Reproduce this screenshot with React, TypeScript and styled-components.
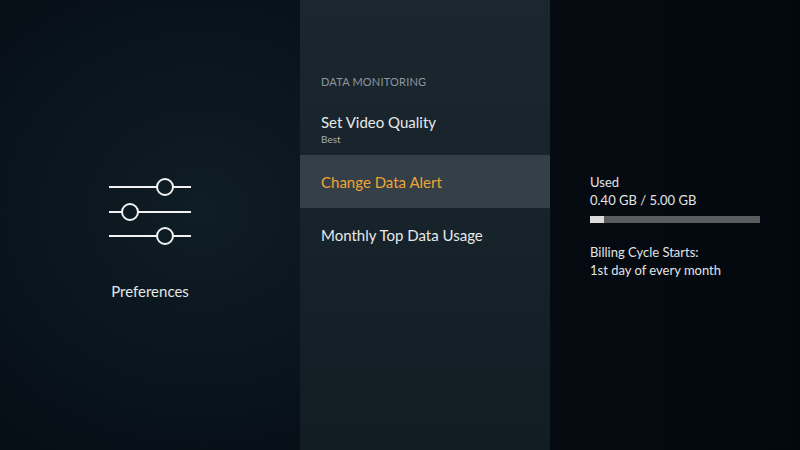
import styled, { createGlobalStyle } from "styled-components";

const GlobalStyle = createGlobalStyle`
  html, body {
    margin: 0;
    padding: 0;
    background: #050b11;
  }
  body {
    font-family: Lato, "Noto Sans", sans-serif;
  }
`;

const Screen = styled.div`
  width: 800px;
  height: 450px;
  display: grid;
  grid-template-columns: 300px 250px 250px;
  overflow: hidden;
  background: radial-gradient(ellipse 420px 380px at 200px 210px, #0f1d25 0%, #08121a 55%, #040910 100%);
`;

const LeftPanel = styled.div`
  display: flex;
  flex-direction: column;
  align-items: center;
  padding-top: 178px;
`;

const IconWrap = styled.div`
  width: 84px;
  height: 70px;
  margin-right: 1px;
`;

const PanelLabel = styled.div`
  margin-top: 33px;
  font-size: 15px;
  line-height: 20px;
  color: #e4e6e7;
`;

const MiddlePanel = styled.div`
  display: flex;
  flex-direction: column;
  padding-top: 75px;
  background: linear-gradient(180deg, #1b262e 0%, #17232b 50%, #111c23 100%);
`;

const SectionTitle = styled.div`
  padding-left: 21px;
  margin-bottom: 13px;
  font-size: 11px;
  line-height: 14px;
  letter-spacing: 0.2px;
  color: #8d979d;
`;

const MenuItem = styled.div<{ $active?: boolean }>`
  height: 53px;
  display: flex;
  flex-direction: column;
  justify-content: center;
  padding-left: 21px;
  background: ${(p) => (p.$active ? "#343f47" : "transparent")};
`;

const ItemTitle = styled.div<{ $active?: boolean }>`
  font-size: 15px;
  line-height: 20px;
  color: ${(p) => (p.$active ? "#efa536" : "#e6e8e9")};
`;

const ItemSub = styled.div`
  margin-top: 1px;
  font-size: 10px;
  line-height: 13px;
  color: #a7aeb2;
`;

const RightPanel = styled.div`
  display: flex;
  flex-direction: column;
  padding: 173px 40px 0 40px;
  background: linear-gradient(90deg, #050b11 0%, #03080e 100%);
`;

const InfoText = styled.div`
  font-size: 13px;
  line-height: 18px;
  color: #e2e4e5;
`;

const Gap = styled.div<{ $h: number }>`
  height: ${(p) => p.$h}px;
`;

const Bar = styled.div`
  margin-top: 7px;
  width: 170px;
  height: 7px;
  background: #5b5c5e;
`;

const BarFill = styled.div`
  height: 100%;
  background: #dcdcdc;
`;

const SliderIcon = () => (
  <svg width="84" height="70" viewBox="0 0 84 70" fill="none" stroke="#f2f2f2" strokeWidth="2">
    <line x1="1" y1="9" x2="49" y2="9" />
    <circle cx="57" cy="9" r="8" />
    <line x1="65" y1="9" x2="83" y2="9" />
    <line x1="1" y1="34" x2="14" y2="34" />
    <circle cx="22" cy="34" r="8" />
    <line x1="30" y1="34" x2="83" y2="34" />
    <line x1="1" y1="58" x2="49" y2="58" />
    <circle cx="57" cy="58" r="8" />
    <line x1="65" y1="58" x2="83" y2="58" />
  </svg>
);

export default function App() {
  const used = 0.4;
  const total = 5;
  return (
    <>
      <GlobalStyle />
      <Screen>
        <LeftPanel>
          <IconWrap>
            <SliderIcon />
          </IconWrap>
          <PanelLabel>Preferences</PanelLabel>
        </LeftPanel>
        <MiddlePanel>
          <SectionTitle>DATA MONITORING</SectionTitle>
          <MenuItem>
            <ItemTitle>Set Video Quality</ItemTitle>
            <ItemSub>Best</ItemSub>
          </MenuItem>
          <MenuItem $active>
            <ItemTitle $active>Change Data Alert</ItemTitle>
          </MenuItem>
          <MenuItem>
            <ItemTitle>Monthly Top Data Usage</ItemTitle>
          </MenuItem>
        </MiddlePanel>
        <RightPanel>
          <InfoText>Used</InfoText>
          <InfoText>0.40 GB / 5.00 GB</InfoText>
          <Bar>
            <BarFill style={{ width: `${(used / total) * 100}%` }} />
          </Bar>
          <Gap $h={20} />
          <InfoText>Billing Cycle Starts:</InfoText>
          <InfoText>1st day of every month</InfoText>
        </RightPanel>
      </Screen>
    </>
  );
}
